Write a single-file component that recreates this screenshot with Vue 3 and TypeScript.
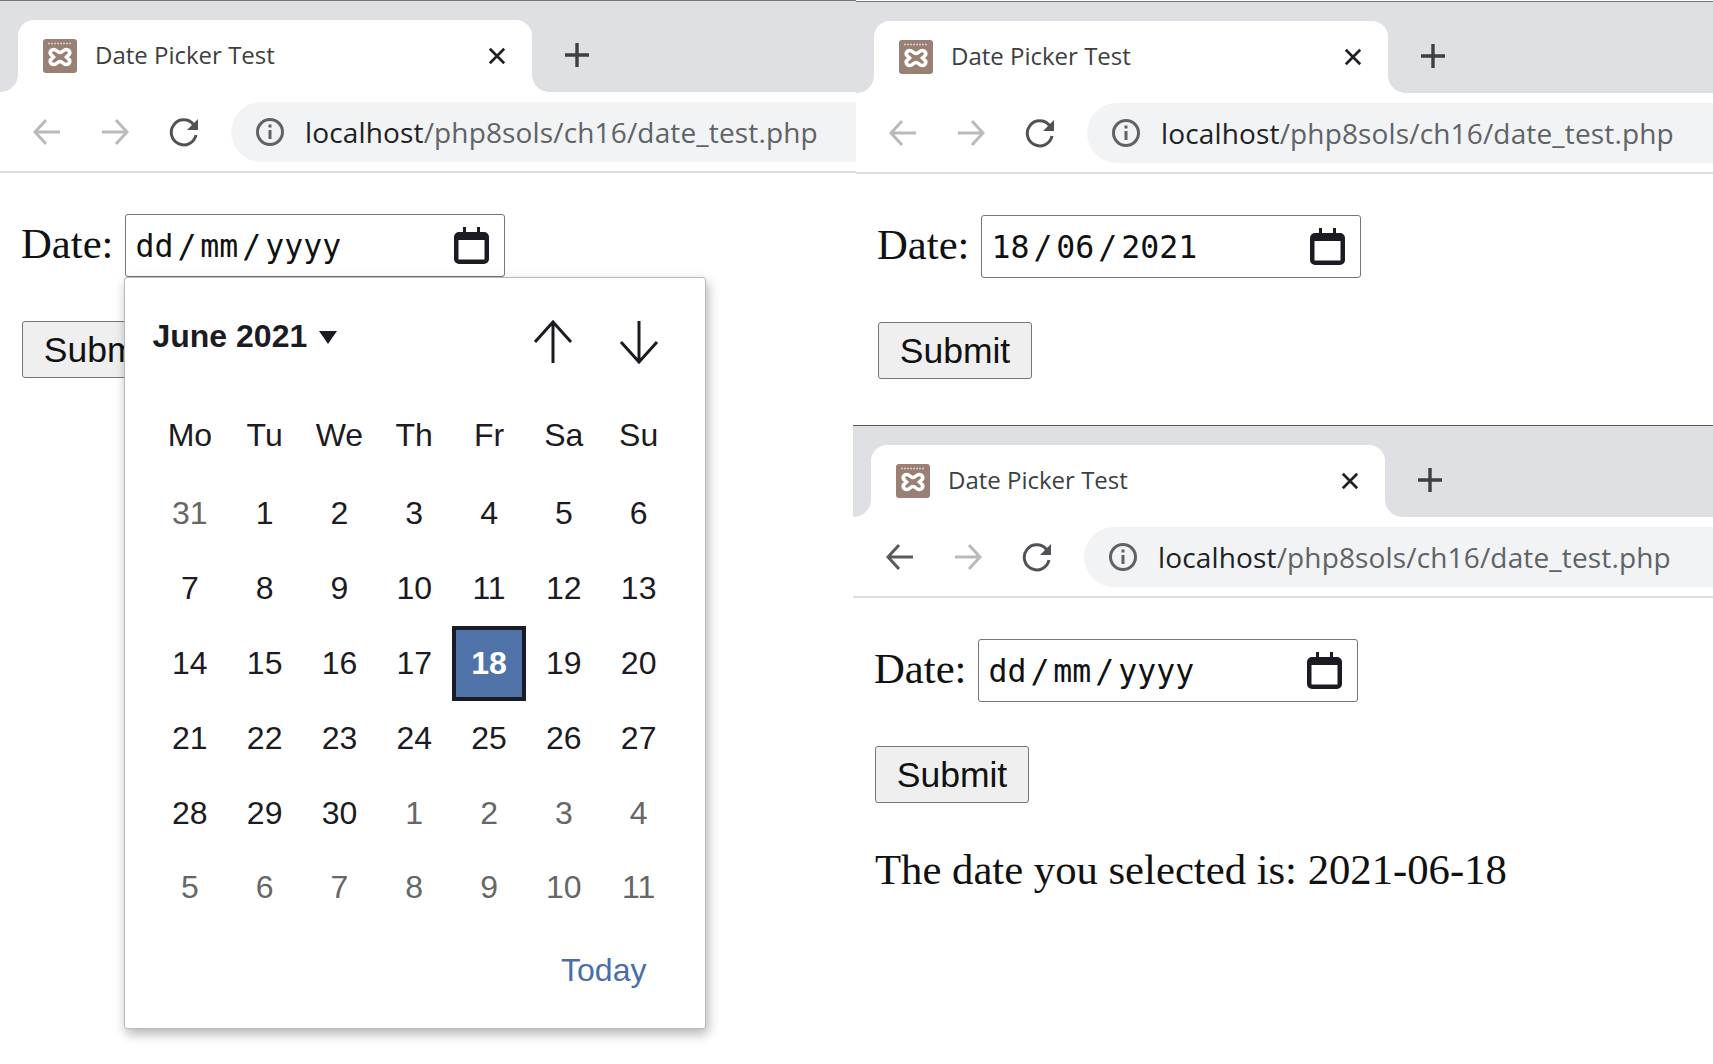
<template>
  <div class="page">
    <section v-for="w in windows" :key="w.id" class="win" :class="w.id">
      <div class="strip">
        <div class="tab">
          <svg class="favicon" viewBox="0 0 34 34">
            <rect width="34" height="34" rx="3" fill="#9a8074" />
            <path d="M5 4.5H29" stroke="#d8cec8" stroke-width="1.5" stroke-dasharray="2 1" />
            <path d="M11 10.500C7.500 10.500 6 14 8.500 16L10.500 18L8.500 20C6 22 7.500 25.500 11 25.500C13.500 25.500 14.500 22.500 17 22.500C19.500 22.500 20.500 25.500 23 25.500C26.500 25.500 28 22 25.500 20L23.500 18L25.500 16C28 14 26.500 10.500 23 10.500C20.500 10.500 19.500 13.500 17 13.500C14.500 13.500 13.500 10.500 11 10.500Z" fill="none" stroke="#fff" stroke-width="3.600" />
          </svg>
          <span class="tab-title">{{ title }}</span>
          <svg class="tab-close" viewBox="0 0 20 20"><path d="M2 2L18 18M18 2L2 18" /></svg>
        </div>
        <svg class="new-tab" viewBox="0 0 26 26"><path d="M13 1V25M1 13H25" /></svg>
      </div>

      <div class="toolbar">
        <svg class="nav" :class="w.canGoBack ? 'on' : 'off'" viewBox="0 0 28 28"><path d="M27 14H2M13 2L2 14L13 26" /></svg>
        <svg class="nav off" viewBox="0 0 28 28"><path d="M1 14H26M15 2L26 14L15 26" /></svg>
        <svg class="reload" viewBox="0 0 32 32">
          <path class="arc" d="M24.500 8.500A12.500 12.500 0 1 0 27 19" />
          <path class="head" d="M29 3V14H18Z" />
        </svg>
        <div class="omnibox">
          <svg class="info" viewBox="0 0 30 30">
            <circle cx="15" cy="15" r="12.500" />
            <path d="M15 13V22M15 7.500V10.500" />
          </svg>
          <span class="url"><b>localhost</b>{{ path }}</span>
        </div>
      </div>

      <div class="content">
        <div class="row">
          <label class="label">Date:</label>
          <div class="field">
            <div class="date-input">
              <span class="segments">
                <span>{{ w.date[0] }}</span><i>/</i><span>{{ w.date[1] }}</span><i>/</i><span>{{ w.date[2] }}</span>
              </span>
              <svg class="cal" viewBox="0 0 35 37">
                <path d="M9 0H12V5H23V0H26V5H30A5 5 0 0 1 35 10V32A5 5 0 0 1 30 37H5A5 5 0 0 1 0 32V10A5 5 0 0 1 5 5H9ZM4.500 13V32.500H30.500V13Z" fill-rule="evenodd" />
              </svg>
            </div>

            <div v-if="w.pickerOpen" class="picker">
              <div class="picker-head">
                <span class="month">June 2021<em class="caret"></em></span>
                <div class="steps">
                  <svg class="step" viewBox="0 0 44 44"><path d="M22 43V2M4 22L22 2L40 22" /></svg>
                  <svg class="step" viewBox="0 0 44 44"><path d="M22 1V42M4 22L22 42L40 22" /></svg>
                </div>
              </div>
              <div class="grid">
                <span v-for="d in weekdays" :key="d" class="cell">{{ d }}</span>
                <span
                  v-for="(d, i) in days"
                  :key="i"
                  class="cell"
                  :class="{ muted: d.muted, selected: d.selected }"
                >{{ d.label }}</span>
              </div>
              <div class="picker-foot">Today</div>
            </div>
          </div>
        </div>
        <button class="submit">Submit</button>
        <p v-if="w.result" class="result">{{ w.result }}</p>
      </div>
    </section>
  </div>
</template>

<script setup lang="ts">
interface Day {
  label: number
  muted: boolean
  selected: boolean
}

interface BrowserWindow {
  id: string
  date: string[]
  canGoBack: boolean
  pickerOpen: boolean
  result?: string
}

const title = 'Date Picker Test'
const path = '/php8sols/ch16/date_test.php'
const weekdays = ['Mo', 'Tu', 'We', 'Th', 'Fr', 'Sa', 'Su']

const windows: BrowserWindow[] = [
  { id: 'win-left', date: ['dd', 'mm', 'yyyy'], canGoBack: false, pickerOpen: true },
  { id: 'win-top', date: ['18', '06', '2021'], canGoBack: false, pickerOpen: false },
  {
    id: 'win-bottom',
    date: ['dd', 'mm', 'yyyy'],
    canGoBack: true,
    pickerOpen: false,
    result: 'The date you selected is: 2021-06-18'
  }
]

// 42 cells: 31 May, then June, then the start of July
const days: Day[] = []
days.push({ label: 31, muted: true, selected: false })
for (let d = 1; d <= 30; d++) {
  days.push({ label: d, muted: false, selected: d === 18 })
}
for (let d = 1; d <= 11; d++) {
  days.push({ label: d, muted: true, selected: false })
}
</script>

<style scoped>
.page {
  display: grid;
  grid-template-columns: 856px 857px;
  grid-template-rows: 425px 639px;
  width: 1713px;
  height: 1064px;
  overflow: hidden;
  background: #fff;
}

.win {
  min-width: 0;
  border-top: 1px solid #777;
}

.win-left {
  grid-row: 1 / 3;
}

.win-top {
  margin-top: 1px;
}

.win-bottom {
  margin-left: -3px;
  border-top-color: #5a5352;
}

.strip {
  display: flex;
  align-items: center;
  height: 91px;
  padding-left: 18px;
  background: #dfe0e4;
}

.tab {
  position: relative;
  align-self: flex-end;
  display: flex;
  align-items: center;
  box-sizing: border-box;
  width: 514px;
  height: 72px;
  padding: 0 0 0 25px;
  background: #fff;
  border-radius: 16px 16px 0 0;
}

.tab::before,
.tab::after {
  content: '';
  position: absolute;
  bottom: 0;
  width: 17px;
  height: 17px;
}

.tab::before {
  left: -17px;
  background: radial-gradient(circle at 0 0, transparent 16.5px, #fff 17px);
}

.tab::after {
  right: -17px;
  background: radial-gradient(circle at 100% 0, transparent 16.5px, #fff 17px);
}

.favicon {
  width: 34px;
  height: 34px;
  flex-shrink: 0;
}

.tab-title {
  margin: -4px 0 0 18px;
  font: 24px 'Open Sans', sans-serif;
  color: #3c4043;
  white-space: nowrap;
}

.tab-close {
  position: absolute;
  left: 470px;
  top: 27px;
  width: 18px;
  height: 18px;
  fill: none;
  stroke: #202124;
  stroke-width: 3;
}

.new-tab {
  width: 26px;
  height: 26px;
  margin: 17px 0 0 32px;
  fill: none;
  stroke: #3c4043;
  stroke-width: 3.4;
}

.toolbar {
  display: flex;
  align-items: center;
  height: 79px;
  padding-left: 33px;
  border-bottom: 2px solid #dadce0;
}

.nav {
  width: 28px;
  height: 28px;
  margin-right: 40px;
  flex-shrink: 0;
  fill: none;
  stroke-width: 3;
}

.nav.off {
  stroke: #b8babc;
}

.nav.on {
  stroke: #5a5a5c;
}

.reload {
  width: 32px;
  height: 32px;
  flex-shrink: 0;
}

.reload .arc {
  fill: none;
  stroke: #4f5256;
  stroke-width: 3;
}

.reload .head {
  fill: #4f5256;
}

.omnibox {
  flex: 1;
  display: flex;
  align-items: center;
  height: 60px;
  margin-left: 30px;
  padding-left: 24px;
  background: #f1f3f4;
  border-radius: 30px 0 0 30px;
}

.info {
  width: 30px;
  height: 30px;
  flex-shrink: 0;
  fill: none;
  stroke: #5f6368;
  stroke-width: 3;
}

.url {
  margin-left: 20px;
  font: 28px 'Open Sans', sans-serif;
  letter-spacing: 0.15px;
  color: #5f6368;
  white-space: nowrap;
}

.url b {
  font-weight: 400;
  color: #202124;
}

.content {
  padding: 41px 22px 0;
}

.row {
  display: flex;
  align-items: center;
  gap: 12px;
}

.label {
  margin: -4px 0 0 -1px;
  font: 42.7px/46px 'Liberation Serif', serif;
  color: #111;
}

.field {
  position: relative;
}

.date-input {
  display: flex;
  align-items: center;
  justify-content: space-between;
  box-sizing: border-box;
  width: 380px;
  height: 63px;
  padding: 0 15px 0 9px;
  border: 1px solid #767676;
  border-radius: 3px;
}

.segments {
  display: flex;
  gap: 4px;
  font: 31.5px 'DejaVu Sans Mono', monospace;
  color: #111;
}

.segments i {
  font-style: normal;
}

.cal {
  width: 35px;
  height: 37px;
  fill: #1c1a22;
}

.picker {
  position: absolute;
  z-index: 2;
  top: 100%;
  left: -1px;
  box-sizing: border-box;
  width: 582px;
  height: 752px;
  padding: 0 31px 0 27px;
  background: #fff;
  border: 1px solid #b9b9b9;
  border-radius: 3px;
  box-shadow: 2px 5px 12px rgba(0, 0, 0, 0.3);
  font-family: 'Liberation Sans', Arial, sans-serif;
}

.picker-head {
  display: flex;
  align-items: center;
  justify-content: space-between;
  height: 120px;
}

.month {
  display: flex;
  align-items: center;
  margin-top: -4px;
  font-size: 32px;
  font-weight: 700;
  color: #1c1a22;
}

.caret {
  width: 0;
  height: 0;
  margin: 2px 0 0 12px;
  border-style: solid;
  border-width: 13px 9px 0;
  border-color: #1c1a22 transparent transparent;
}

.steps {
  display: flex;
  gap: 42px;
  margin: 8px 13px 0 0;
}

.step {
  width: 44px;
  height: 44px;
  fill: none;
  stroke: #1c1a22;
  stroke-width: 3;
}

.grid {
  display: grid;
  grid-template-columns: repeat(7, 74.8px);
  grid-template-rows: 78.5px;
  grid-auto-rows: 74.8px;
}

.cell {
  display: flex;
  align-items: center;
  justify-content: center;
  font-size: 32px;
  color: #1c1a22;
}

.cell:nth-child(-n + 7) {
  padding-bottom: 3.7px;
}

.cell.muted {
  color: #666;
}

.cell.selected {
  box-sizing: border-box;
  font-weight: 700;
  color: #fff;
  background: #4f72a8;
  border: 4px solid #1c1a22;
}

.picker-foot {
  padding: 22px 28px 0 0;
  text-align: right;
  font-size: 32px;
  line-height: 46px;
  color: #4a6ea9;
}

.submit {
  display: block;
  width: 154px;
  height: 57px;
  margin-top: 44px;
  padding: 2px 0 0;
  font: 35.5px 'Liberation Sans', Arial, sans-serif;
  color: #111;
  background: #efefef;
  border: 1px solid #767676;
  border-radius: 3px;
}

.result {
  margin: 44px 0 0;
  font: 42.7px/46px 'Liberation Serif', serif;
  color: #111;
}
</style>

<style>
html,
body {
  margin: 0;
  background: #fff;
  overflow: hidden;
}
</style>
